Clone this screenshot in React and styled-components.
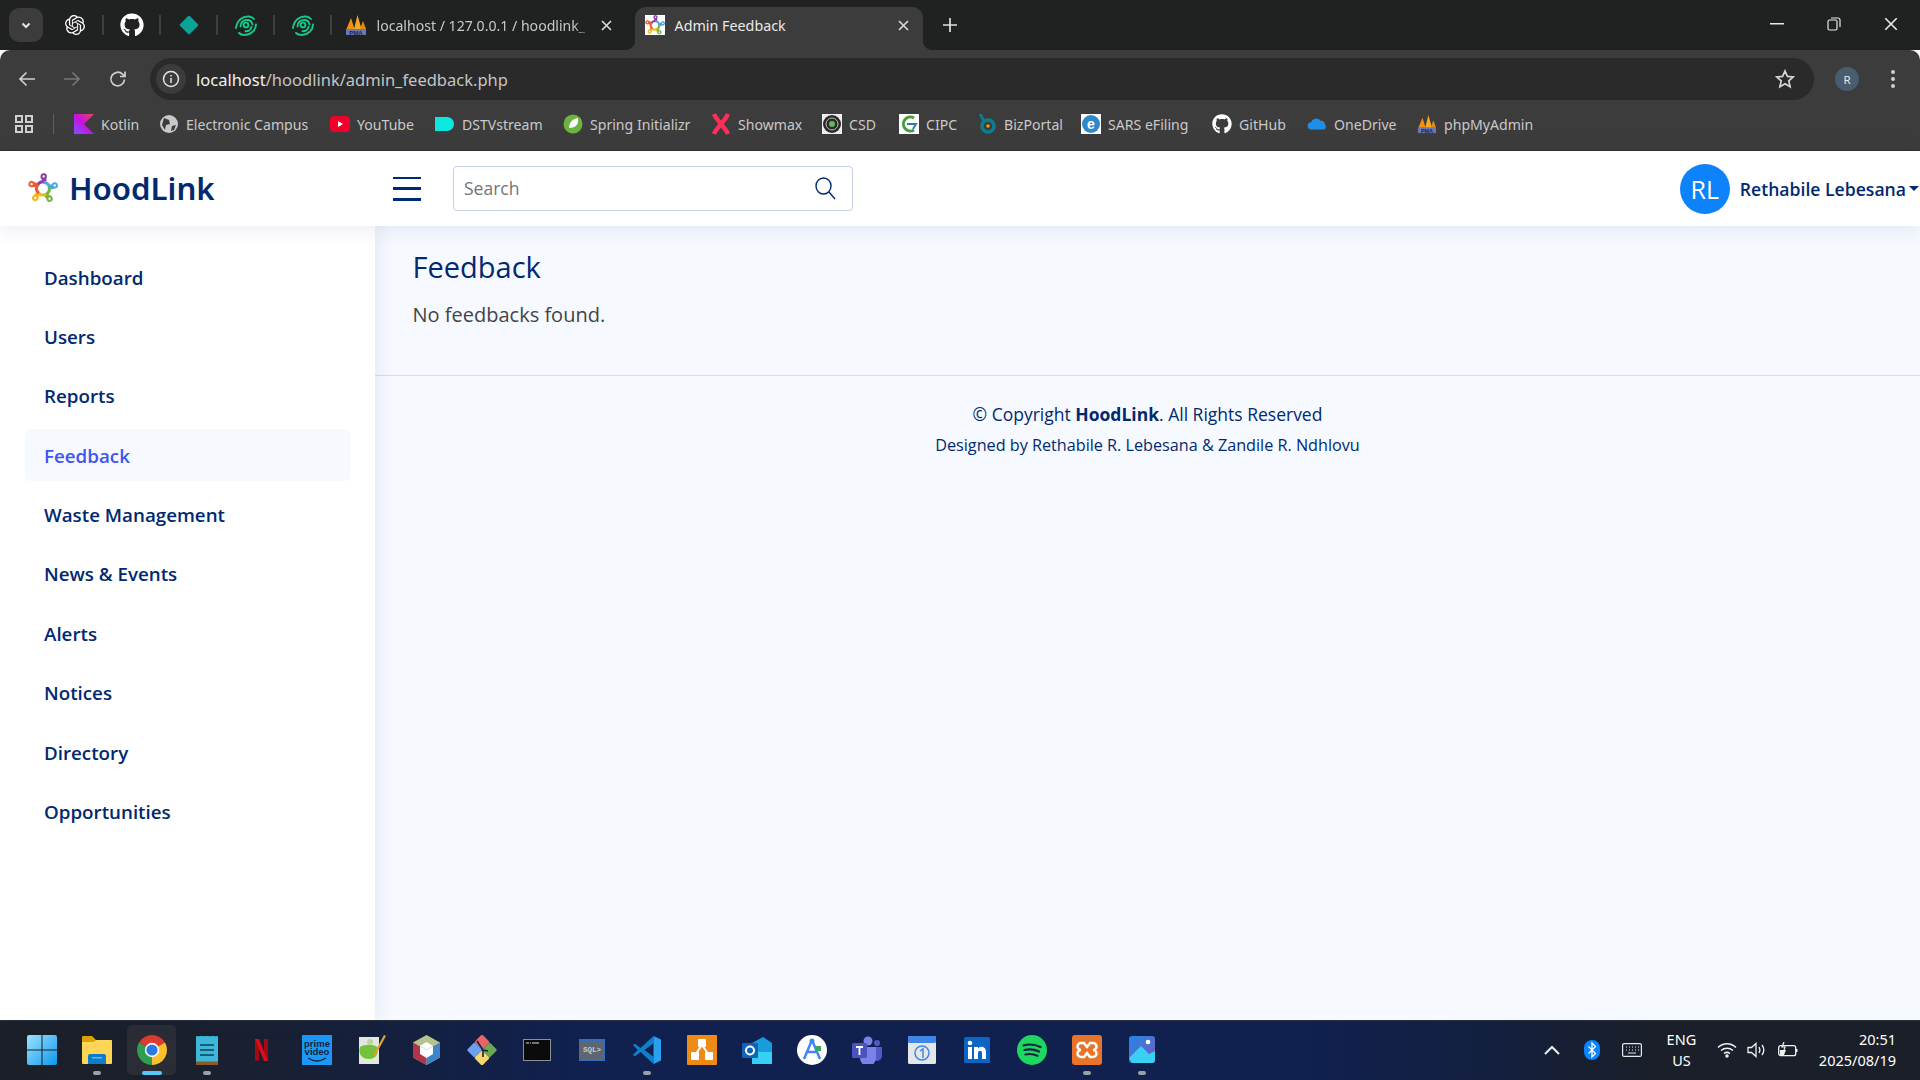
import React from "react"
import styled, { createGlobalStyle } from "styled-components"
import { FaGithub } from "react-icons/fa"
import { SiOpenai } from "react-icons/si"

const GlobalStyle = createGlobalStyle`
  html, body {
    margin: 0;
    padding: 0;
    height: 100%;
    overflow: hidden;
    background: #f6f9ff;
  }
  * {
    box-sizing: border-box;
  }
`

const Screen = styled.div`
  width: 1920px;
  height: 1080px;
  display: flex;
  flex-direction: column;
  overflow: hidden;
  font-family: "Open Sans", "Noto Sans", sans-serif;
`

/* browser chrome */
const TabStrip = styled.div`
  height: 50px;
  flex: none;
  background: #202221;
  display: flex;
  align-items: flex-end;
  font-family: "Noto Sans", "Open Sans", sans-serif;
`
const TabSearch = styled.div`
  width: 34px;
  height: 34px;
  margin: 0 3.5px 8px 9px;
  border-radius: 10px;
  background: #3c3c3c;
  display: flex;
  align-items: center;
  justify-content: center;
`
const PinnedTab = styled.div`
  width: 57px;
  height: 50px;
  display: flex;
  align-items: center;
  justify-content: center;
  position: relative;
  color: #fff;
  &::after {
    content: "";
    position: absolute;
    right: 0;
    top: 15px;
    width: 2px;
    height: 20px;
    background: #3e3f3f;
  }
`
const Tab = styled.div`
  width: 303px;
  height: 50px;
  padding: 0 23px 0 13px;
  display: flex;
  align-items: center;
  gap: 10px;
  font-size: 14.1px;
  color: #c8c8c8;
  flex: none;
`
const ActiveTab = styled.div`
  width: 288px;
  height: 43px;
  padding: 0 14px 7px 10px;
  display: flex;
  align-items: center;
  gap: 10px;
  font-size: 14.3px;
  color: #e9e9e9;
  background: #3c3c3c;
  border-radius: 11px 11px 0 0;
  flex: none;
  position: relative;
  &::before,
  &::after {
    content: "";
    position: absolute;
    bottom: 0;
    width: 10px;
    height: 10px;
  }
  &::before {
    left: -10px;
    background: radial-gradient(circle at 0 0, #202221 10px, #3c3c3c 10.5px);
  }
  &::after {
    right: -10px;
    background: radial-gradient(circle at 100% 0, #202221 10px, #3c3c3c 10.5px);
  }
`
const TabTitle = styled.span`
  flex: 1;
  white-space: nowrap;
  mask-image: ${(p) => (p.$fade ? "linear-gradient(90deg, #000 92%, transparent)" : "none")};
`
const NewTab = styled.div`
  width: 50px;
  height: 50px;
  margin-left: 2px;
  padding-bottom: 1px;
  display: flex;
  align-items: center;
  justify-content: center;
`
const WindowControls = styled.div`
  margin-left: auto;
  height: 50px;
  display: flex;
  align-items: center;
  padding-right: 22px;
  gap: 43px;
  padding-bottom: 2px;
`
const Toolbar = styled.div`
  height: 58px;
  flex: none;
  background: #3c3c3c;
  border-radius: 10px 10px 0 0;
  display: flex;
  align-items: center;
  padding: 8px 24px 8px 16px;
`
const NavIcon = styled.div`
  width: 22px;
  height: 22px;
  margin-right: ${(p) => p.$mr}px;
  display: flex;
  align-items: center;
  justify-content: center;
  flex: none;
`
const Omnibox = styled.div`
  flex: 1;
  height: 42px;
  background: #2a2a2a;
  border-radius: 21px;
  display: flex;
  align-items: center;
  padding: 0 19px 0 6px;
  font-family: "Noto Sans", "Open Sans", sans-serif;
`
const InfoBadge = styled.div`
  width: 30px;
  height: 30px;
  border-radius: 50%;
  background: #3c3c3c;
  display: flex;
  align-items: center;
  justify-content: center;
  margin-right: 10px;
`
const Url = styled.div`
  flex: 1;
  font-size: 16.5px;
  color: #c4c4c4;
  b {
    font-weight: 400;
    color: #f1f1f1;
  }
`
const AccountBadge = styled.div`
  width: 24px;
  height: 24px;
  border-radius: 50%;
  background: #4a5d6e;
  color: #e8e8e8;
  font-size: 11.5px;
  display: flex;
  align-items: center;
  justify-content: center;
  margin: 0 31px 0 21px;
  flex: none;
  font-family: "Noto Sans", sans-serif;
`
const BookmarkBar = styled.div`
  height: 43px;
  flex: none;
  background: #3c3c3c;
  border-bottom: 1px solid #2f2f2f;
  display: flex;
  align-items: center;
  padding: 0 0 10px 14px;
  font-family: "Noto Sans", "Open Sans", sans-serif;
`
const AppsDivider = styled.div`
  width: 1px;
  height: 20px;
  background: #5f5f5f;
  margin: 0 20px 0 19px;
`
const Bookmark = styled.div`
  display: flex;
  align-items: center;
  gap: 7px;
  width: ${(p) => p.$w}px;
  flex: none;
  font-size: 14.1px;
  color: #c9c9c9;
  white-space: nowrap;
`
const BookmarkIcon = styled.div`
  width: 20px;
  height: 20px;
  flex: none;
  display: flex;
  align-items: center;
  justify-content: center;
  color: #fff;
`

/* the page */
const Header = styled.header`
  height: 75px;
  flex: none;
  background: #fff;
  box-shadow: 0 2px 20px rgba(1, 41, 112, 0.1);
  display: flex;
  align-items: center;
  position: relative;
  z-index: 2;
`
const Logo = styled.div`
  width: 393px;
  padding: 0 0 2px 28px;
  display: flex;
  align-items: center;
  gap: 11px;
  font-family: "Noto Sans", sans-serif;
  font-size: 31.2px;
  font-weight: 600;
  color: #012970;
  flex: none;
`
const Burger = styled.div`
  width: 28px;
  height: 24px;
  margin-right: 32px;
  flex: none;
  display: flex;
  flex-direction: column;
  justify-content: space-between;
  span {
    display: block;
    height: 2.5px;
    background: #012970;
  }
`
const SearchBox = styled.div`
  width: 400px;
  height: 45px;
  border: 1px solid #c5d0e4;
  border-radius: 4px;
  display: flex;
  align-items: center;
  justify-content: space-between;
  padding: 0 16px 2px 10px;
  font-size: 17.5px;
  color: #6d747a;
`
const Profile = styled.div`
  margin-left: auto;
  display: flex;
  align-items: center;
  font-size: 17.6px;
  line-height: 24px;
  font-weight: 600;
  color: #012970;
`
const Avatar = styled.div`
  width: 50px;
  height: 50px;
  border-radius: 50%;
  background: #0d82fb;
  color: #fff;
  font-size: 25px;
  font-weight: 400;
  display: flex;
  align-items: center;
  justify-content: center;
  margin-right: 10px;
`
const Caret = styled.span`
  width: 0;
  height: 0;
  border-left: 5.5px solid transparent;
  border-right: 5.5px solid transparent;
  border-top: 5.5px solid #012970;
  margin: 0 1px 0 3px;
`
const Body = styled.div`
  flex: 1;
  display: flex;
  min-height: 0;
`
const Sidebar = styled.aside`
  width: 375px;
  flex: none;
  background: #fff;
  box-shadow: 0 0 20px rgba(1, 41, 112, 0.1);
  padding: 25px 25px 0;
  position: relative;
  z-index: 1;
`
const NavItem = styled.div`
  height: 52px;
  margin-bottom: 7.4px;
  padding-left: 19px;
  display: flex;
  align-items: center;
  border-radius: 5px;
  font-size: 18.75px;
  font-weight: 600;
  color: ${(p) => (p.$active ? "#4154f1" : "#012970")};
  background: ${(p) => (p.$active ? "#f6f9ff" : "transparent")};
`
const Main = styled.main`
  flex: 1;
  background: #f6f9ff;
  display: flex;
  flex-direction: column;
`
const Content = styled.section`
  height: 150px;
  padding: 21px 0 0 37.5px;
  border-bottom: 1px solid #cddfff;
`
const Title = styled.h1`
  margin: 0 0 13px;
  font-size: 29px;
  line-height: 40px;
  font-weight: 500;
  color: #012970;
`
const Empty = styled.p`
  margin: 0;
  font-size: 20px;
  line-height: 30px;
  color: #444;
`
const Footer = styled.footer`
  padding-top: 25px;
  text-align: center;
  color: #012970;
`
const Copyright = styled.div`
  font-size: 17.5px;
  line-height: 26px;
  margin-bottom: 5px;
  b {
    font-weight: 700;
  }
`
const Credits = styled.div`
  font-size: 16.2px;
  line-height: 26px;
`

/* windows taskbar */
const Taskbar = styled.div`
  height: 60px;
  flex: none;
  background: linear-gradient(90deg, #1b1f27 0%, #1a2030 12%, #10204f 30%, #10204f 68%, #141f3e 78%, #1a1f29 86%);
  border-top: 1px solid #2c303a;
  display: flex;
  align-items: center;
  padding: 0 0 2px 14px;
  font-family: "Noto Sans", "Open Sans", sans-serif;
`
const Slot = styled.div`
  width: ${(p) => (p.$active ? 49 : 55)}px;
  height: 50px;
  margin: 0 ${(p) => (p.$active ? 3 : 0)}px;
  flex: none;
  display: flex;
  align-items: center;
  justify-content: center;
  position: relative;
  border-radius: 5px;
  background: ${(p) => (p.$active ? "#2a2d36" : "transparent")};
  &::after {
    content: "";
    display: ${(p) => (p.$dot ? "block" : "none")};
    position: absolute;
    bottom: 0;
    left: 50%;
    transform: translateX(-50%);
    width: ${(p) => (p.$active ? 20 : 8)}px;
    height: 4px;
    border-radius: 2px;
    background: ${(p) => (p.$active ? "#5cc5f8" : "#9aa0a8")};
  }
`
const Tray = styled.div`
  margin-left: auto;
  display: flex;
  align-items: center;
  color: #fff;
`
const TrayIcon = styled.div`
  width: ${(p) => p.$w}px;
  flex: none;
  display: flex;
  justify-content: center;
`
const Lang = styled.div`
  width: 48px;
  text-align: center;
  font-size: 14.5px;
  line-height: 21px;
  margin: 0 8.6px 0 5px;
  flex: none;
`
const Clock = styled.div`
  width: 90px;
  margin: 0 24px 0 3px;
  font-size: 14.5px;
  line-height: 21px;
  text-align: right;
  flex: none;
  white-space: nowrap;
  span {
    display: block;
  }
`

/* icons */
const Chevron = () => (
  <svg width="12" height="12" viewBox="0 0 12 12" fill="none" stroke="#e6e6e6" strokeWidth="2">
    <path d="M2.5 4.5 6 8l3.5-3.5" />
  </svg>
)
const Close = ({ color = "#dcdcdc", size = 11, w = 1.6 }) => (
  <svg width={size} height={size} viewBox="0 0 11 11" stroke={color} strokeWidth={w} style={{ flex: "none" }}>
    <path d="M1 1l9 9M10 1l-9 9" />
  </svg>
)
const Fingerprint = () => (
  <svg width="24" height="22" viewBox="0 0 24 22" fill="none" stroke="#15c98f" strokeWidth="1.9" strokeLinecap="round">
    <circle cx="12" cy="11" r="2.4" />
    <path d="M6.5 12.5C6.5 8 10 6 13 6c3 0 5 2 5.500 4.500" />
    <path d="M2 14C3 6 9 2 15 2.500c2.500.3 4 1.300 5 2.500" />
    <path d="M17.500 13c-.5 2.500-3 4.500-6 4.300M22 10.500c0 5-4 10-11 10.500-2.500 0-4.500-.5-6-2" />
  </svg>
)
const Diamond = () => (
  <svg width="22" height="22" viewBox="0 0 22 22">
    <rect x="4" y="4" width="14" height="14" rx="1.5" transform="rotate(45 11 11)" fill="#0aa398" />
  </svg>
)
const Pma = ({ size = 22 }) => (
  <svg width={size} height={size} viewBox="0 0 22 22" style={{ flex: "none" }}>
    <path d="M6 4 9.500 15h-8z" fill="#f29111" />
    <path d="M12.500 1l4 14H9z" fill="#f7a823" />
    <path d="M18 7l3 8h-6z" fill="#e98a10" />
    <rect x="1" y="15" width="20" height="6" fill="#6c78af" />
    <text x="11" y="20.5" textAnchor="middle" fontSize="6" fontWeight="700" fill="#1d2450" fontFamily="Liberation Sans">
      PMA
    </text>
  </svg>
)
const logoColors = ["#8e3cab", "#4aa8e0", "#74b83d", "#f3b523", "#ee5a2b"]
const LogoMark = ({ size = 30, bg = "transparent" }) => (
  <svg width={size} height={size} viewBox="0 0 30 30" style={{ flex: "none", background: bg }}>
    {logoColors.map((c, i) => (
      <g key={c} transform={`rotate(${i * 72 + 8} 15 15.5)`} fill="none">
        <path d="M15.500 8.800c-3.500.1-5.800 2-6.600 5" stroke={c} strokeWidth="3" />
        <path d="M14.500 10c.8-2.500.5-4.500-.5-6" stroke={c} strokeWidth="4.600" />
        <circle cx="14" cy="3.400" r="2.200" stroke={c} strokeWidth="2" fill="#fff" />
      </g>
    ))}
  </svg>
)
const Back = ({ color }) => (
  <svg width="20" height="20" viewBox="0 0 20 20" fill="none" stroke={color} strokeWidth="1.7">
    <path d="M18 10H3M9.500 3.500 3 10l6.500 6.500" />
  </svg>
)
const Forward = ({ color }) => (
  <svg width="20" height="20" viewBox="0 0 20 20" fill="none" stroke={color} strokeWidth="1.7">
    <path d="M2 10h15M10.500 3.500 17 10l-6.500 6.500" />
  </svg>
)
const Reload = () => (
  <svg width="20" height="20" viewBox="0 0 20 20" fill="none" stroke="#cfcfcf" strokeWidth="1.7">
    <path d="M16.500 10.500a6.800 6.800 0 1 1-2-5.300L17 7.500" />
    <path d="M17 2.500v5h-5" />
  </svg>
)
const Info = () => (
  <svg width="18" height="18" viewBox="0 0 18 18" fill="none" stroke="#e4e4e4" strokeWidth="1.5">
    <circle cx="9" cy="9" r="7.5" />
    <path d="M9 8v5M9 5v1.500" />
  </svg>
)
const Star = () => (
  <svg width="20" height="20" viewBox="0 0 20 20" fill="none" stroke="#d6d6d6" strokeWidth="1.7" style={{ flex: "none" }}>
    <path d="M10 2l2.400 5.400 5.800.6-4.400 3.900 1.300 5.800L10 14.700l-5.100 3 1.300-5.800L1.800 8l5.800-.6z" />
  </svg>
)
const Dots = () => (
  <svg width="6" height="20" viewBox="0 0 6 20" fill="#cfcfcf" style={{ flex: "none" }}>
    <circle cx="3" cy="3" r="2" />
    <circle cx="3" cy="10" r="2" />
    <circle cx="3" cy="17" r="2" />
  </svg>
)
const AppsGrid = () => (
  <svg width="20" height="20" viewBox="0 0 20 20" fill="none" stroke="#cfcfcf" strokeWidth="2" style={{ flex: "none" }}>
    <rect x="2" y="2" width="6" height="6" />
    <rect x="12" y="2" width="6" height="6" />
    <rect x="2" y="12" width="6" height="6" />
    <rect x="12" y="12" width="6" height="6" />
  </svg>
)
const SearchIcon = () => (
  <svg width="22" height="24" viewBox="0 0 22 24" fill="none" stroke="#012970" strokeWidth="1.4">
    <ellipse cx="9.5" cy="10" rx="7.5" ry="8" />
    <path d="M15 16l6 7" />
  </svg>
)

const bookmarkIcons = {
  kotlin: (
    <svg width="20" height="20" viewBox="0 0 20 20">
      <defs>
        <linearGradient id="kt" x1="0" y1="1" x2="1" y2="0">
          <stop offset="0" stopColor="#7f52ff" />
          <stop offset="0.5" stopColor="#c711e1" />
          <stop offset="1" stopColor="#e44857" />
        </linearGradient>
      </defs>
      <path d="M0 0h20L10 10l10 10H0z" fill="url(#kt)" />
    </svg>
  ),
  campus: (
    <svg width="20" height="20" viewBox="0 0 20 20">
      <circle cx="10" cy="10" r="9" fill="#c8c8c8" />
      <path d="M5 4l5 2 1 4-4 1-1 5-3-5zM13 12l4-1-2 5-3 1z" fill="#3c3c3c" />
    </svg>
  ),
  youtube: (
    <svg width="20" height="20" viewBox="0 0 20 20">
      <rect y="2" width="20" height="16" rx="4" fill="#f0002a" />
      <path d="M8 7l5 3-5 3z" fill="#fff" />
    </svg>
  ),
  dstv: (
    <svg width="20" height="20" viewBox="0 0 20 20">
      <path d="M0 3h12a7 7 0 0 1 0 14H0z" fill="#0ce8e0" />
    </svg>
  ),
  spring: (
    <svg width="20" height="20" viewBox="0 0 20 20">
      <circle cx="10" cy="10" r="9.5" fill="#6db33f" />
      <path d="M15 4c1 6-2 10-9 10 0-5 3-9 9-10z" fill="#fff" />
    </svg>
  ),
  showmax: (
    <svg width="20" height="22" viewBox="0 0 20 22" fill="none" strokeWidth="4.5">
      <path d="M3 1c2 5 5 7 7 10-2 3-5 5-7 10" stroke="#ff2e57" />
      <path d="M17 1c-2 5-5 7-7 10 2 3 5 5 7 10" stroke="#ff2e57" />
    </svg>
  ),
  csd: (
    <svg width="20" height="20" viewBox="0 0 20 20">
      <rect width="20" height="20" fill="#f0f0f0" />
      <circle cx="10" cy="10" r="9" fill="#2a2a2a" />
      <circle cx="10" cy="10" r="6" fill="none" stroke="#bbb" />
      <circle cx="10" cy="10" r="3" fill="#5cb85c" />
    </svg>
  ),
  cipc: (
    <svg width="20" height="20" viewBox="0 0 20 20">
      <rect width="20" height="20" fill="#fff" />
      <path d="M15 4a7 7 0 1 0 0 12" fill="none" stroke="#4a9e3f" strokeWidth="3" />
      <path d="M8 10h9l-3 5" fill="none" stroke="#2d7fa8" strokeWidth="2" />
    </svg>
  ),
  biz: (
    <svg width="20" height="20" viewBox="0 0 20 20">
      <path d="M3 0l4 7" stroke="#0b7f8f" strokeWidth="3" />
      <circle cx="11" cy="12" r="6" fill="none" stroke="#0b7f8f" strokeWidth="3.5" />
      <circle cx="11" cy="12" r="1.8" fill="#f39c12" />
    </svg>
  ),
  sars: (
    <svg width="20" height="20" viewBox="0 0 20 20">
      <rect width="20" height="20" fill="#fff" />
      <circle cx="10" cy="10" r="9" fill="#2f88c9" />
      <text x="10" y="15" textAnchor="middle" fontSize="14" fontWeight="700" fill="#fff" fontFamily="Liberation Sans">
        e
      </text>
    </svg>
  ),
  github: <FaGithub size={20} />,
  onedrive: (
    <svg width="22" height="20" viewBox="0 0 22 20">
      <path d="M5 16a4 4 0 0 1-.5-8A6 6 0 0 1 15 6.500a4.500 4.500 0 0 1 5 4.500c1.500 2 .5 5-2 5z" fill="#1d8fe8" />
    </svg>
  ),
  pma: <Pma size={20} />,
}

const bookmarks = [
  { name: "Kotlin", icon: "kotlin", w: 85 },
  { name: "Electronic Campus", icon: "campus", w: 171 },
  { name: "YouTube", icon: "youtube", w: 105 },
  { name: "DSTVstream", icon: "dstv", w: 128 },
  { name: "Spring Initializr", icon: "spring", w: 148 },
  { name: "Showmax", icon: "showmax", w: 111 },
  { name: "CSD", icon: "csd", w: 77 },
  { name: "CIPC", icon: "cipc", w: 78 },
  { name: "BizPortal", icon: "biz", w: 104 },
  { name: "SARS eFiling", icon: "sars", w: 131 },
  { name: "GitHub", icon: "github", w: 95 },
  { name: "OneDrive", icon: "onedrive", w: 110 },
  { name: "phpMyAdmin", icon: "pma", w: 120 },
]

const taskIcons = [
  {
    key: "win",
    svg: (
      <svg width="30" height="30" viewBox="0 0 30 30">
        <defs>
          <linearGradient id="wn" x1="0" y1="0" x2="1" y2="1">
            <stop offset="0" stopColor="#9fe3fb" />
            <stop offset="1" stopColor="#0c98ef" />
          </linearGradient>
        </defs>
        <path d="M2 0h12.500v14.500H0V2a2 2 0 0 1 2-2zM15.500 0H28a2 2 0 0 1 2 2v12.500H15.500zM0 15.500h14.500V30H2a2 2 0 0 1-2-2zM15.500 15.500H30V28a2 2 0 0 1-2 2H15.500z" fill="url(#wn)" />
      </svg>
    ),
  },
  {
    key: "explorer",
    dot: true,
    svg: (
      <svg width="30" height="28" viewBox="0 0 30 28">
        <path d="M1 0h9l4 4h15a1 1 0 0 1 1 1v5H0V1a1 1 0 0 1 1-1z" fill="#dba200" />
        <path d="M0 6h12l2-2h15a1 1 0 0 1 1 1v22a1 1 0 0 1-1 1H1a1 1 0 0 1-1-1z" fill="#ffd558" />
        <path d="M6 20a2 2 0 0 1 2-2h14a2 2 0 0 1 2 2v8H6z" fill="#0f7ccb" />
        <rect x="10" y="21" width="10" height="1.5" fill="#5eb7ee" />
      </svg>
    ),
  },
  {
    key: "chrome",
    dot: true,
    active: true,
    svg: (
      <svg width="30" height="30" viewBox="0 0 30 30">
        <path d="M15 15 2.010 7.500a15 15 0 0 1 25.980 0z" fill="#dd3b30" />
        <path d="M15 15l12.990-7.500A15 15 0 0 1 15 30z" fill="#fbc02d" />
        <path d="M15 15v15A15 15 0 0 1 2.010 7.500z" fill="#2f9e4f" />
        <circle cx="15" cy="15" r="7.2" fill="#fff" />
        <circle cx="15" cy="15" r="5.6" fill="#2a78e4" />
      </svg>
    ),
  },
  {
    key: "notepad",
    dot: true,
    svg: (
      <svg width="22" height="30" viewBox="0 0 22 30">
        <rect y="1" width="22" height="29" rx="1" fill="#3fb7d8" />
        <rect y="26.5" width="22" height="3.5" fill="#8a5a2b" />
        <path d="M3 2v-1M8 2v-1M14 2v-1M19 2v-1" stroke="#19a0c4" strokeWidth="2.5" />
        <path d="M4 10h14M4 15h14M4 20h14" stroke="#12607a" strokeWidth="2.2" />
      </svg>
    ),
  },
  {
    key: "netflix",
    svg: (
      <svg width="13" height="22" viewBox="0 0 13 22">
        <path d="M0 0h4v21.500L0 22zM9 0h4v22l-4-.5z" fill="#a50912" />
        <path d="M0 0h4l9 22H9z" fill="#d60f1a" />
      </svg>
    ),
  },
  {
    key: "prime",
    svg: (
      <svg width="30" height="30" viewBox="0 0 30 30">
        <rect width="30" height="30" fill="#1b98f5" />
        <text x="15" y="11.5" textAnchor="middle" fontSize="9.5" fontWeight="700" fill="#10233f" fontFamily="Liberation Sans">
          prime
        </text>
        <text x="15" y="20" textAnchor="middle" fontSize="9.5" fontWeight="700" fill="#10233f" fontFamily="Liberation Sans">
          video
        </text>
        <path d="M6 23c6 4 12 4 18 0" fill="none" stroke="#10233f" strokeWidth="1.5" />
      </svg>
    ),
  },
  {
    key: "npp",
    svg: (
      <svg width="28" height="30" viewBox="0 0 28 30">
        <path d="M1 2h20v27H1z" fill="#e4e7dc" />
        <path d="M2 12c4-3 14-3 17 0 2 5 0 12-8 12S0 18 2 12z" fill="#74c23a" />
        <circle cx="12" cy="7" r="3" fill="#bcd3a0" />
        <path d="M26 0l2 1-11 20-2-1z" fill="#d8a23a" />
      </svg>
    ),
  },
  {
    key: "netbeans",
    svg: (
      <svg width="27" height="30" viewBox="0 0 27 30">
        <path d="M13.500 0 27 7.500v15L13.500 30 0 22.500v-15z" fill="#b4c48a" />
        <path d="M0 7.500l13.500 7.500V30L0 22.500z" fill="#b5324d" />
        <path d="M27 7.500 13.500 15V30L27 22.500z" fill="#3f83c8" />
        <path d="M13.500 7 20 11v8l-6.500 4L7 19v-8z" fill="#fff" />
        <path d="M7 11l6.500 4 6.500-4" fill="none" stroke="#d8dde4" />
      </svg>
    ),
  },
  {
    key: "git",
    svg: (
      <svg width="30" height="30" viewBox="0 0 30 30">
        <rect x="9.5" y="1.5" width="11" height="11" rx="1.5" transform="rotate(45 15 7)" fill="#e7646a" />
        <rect x="17" y="9.5" width="11" height="11" rx="1.5" transform="rotate(45 22.5 15)" fill="#6ba84f" />
        <rect x="2" y="9.5" width="11" height="11" rx="1.5" transform="rotate(45 7.5 15)" fill="#6aa2ee" />
        <rect x="9.5" y="17.5" width="11" height="11" rx="1.5" transform="rotate(45 15 23)" fill="#f5d76e" />
        <path d="M10 6l6 9v7M16 15l5 1" stroke="#1a2240" strokeWidth="1.6" fill="none" />
      </svg>
    ),
  },
  {
    key: "cmd",
    svg: (
      <svg width="28" height="22" viewBox="0 0 28 22">
        <rect width="28" height="22" fill="#8b9096" />
        <rect x="1" y="1" width="26" height="20" fill="#0b0b0b" />
        <path d="M3 4h3M7 4h1M9 4h7" stroke="#ddd" strokeWidth="1.2" />
      </svg>
    ),
  },
  {
    key: "sql",
    svg: (
      <svg width="26" height="22" viewBox="0 0 26 22">
        <rect width="26" height="22" fill="#2f6fc0" />
        <rect x="1" y="2" width="24" height="19" fill="#5f6670" />
        <text x="13" y="13" textAnchor="middle" fontSize="7.5" fontWeight="700" fill="#c8ccd2" fontFamily="Liberation Mono">
          SQL&gt;
        </text>
      </svg>
    ),
  },
  {
    key: "vscode",
    dot: true,
    svg: (
      <svg width="30" height="30" viewBox="0 0 30 30">
        <path d="M21.500 1 8.500 13 3 8.800.8 10l5 5-5 5L3 21.200 8.500 17l13 12v-7.200L12.500 15l9-6.800z" fill="#0f7fcb" />
        <path d="M21.500 1 29 4.500v21L21.500 29z" fill="#2aa1ee" />
      </svg>
    ),
  },
  {
    key: "drawio",
    svg: (
      <svg width="30" height="30" viewBox="0 0 30 30">
        <rect width="30" height="30" rx="1" fill="#ee8a16" />
        <path d="M15 10 8 20M15 10l7 10" stroke="#fff" strokeWidth="2" />
        <rect x="11" y="4" width="8" height="8" rx="1" fill="#fff" />
        <rect x="4" y="17" width="8" height="8" rx="1" fill="#fff" />
        <rect x="18" y="17" width="8" height="8" rx="1" fill="#fff" />
      </svg>
    ),
  },
  {
    key: "outlook",
    svg: (
      <svg width="30" height="28" viewBox="0 0 30 28">
        <path d="M10 7l11-6 9 6v21H10z" fill="#1a9bdc" />
        <path d="M10 16h20v12H10z" fill="#35d0f4" />
        <rect y="7" width="16" height="15" rx="1" fill="#0f64b8" />
        <circle cx="8" cy="14.5" r="4" fill="none" stroke="#fff" strokeWidth="2" />
      </svg>
    ),
  },
  {
    key: "android",
    svg: (
      <svg width="30" height="30" viewBox="0 0 30 30">
        <circle cx="15" cy="15" r="15" fill="#fff" />
        <path d="M15 5 7 24M15 5l8 19M9 17h12" fill="none" stroke="#4285f4" strokeWidth="2.5" />
        <circle cx="15" cy="6" r="2.5" fill="#4285f4" />
        <rect x="19" y="11" width="5" height="5" fill="#3ba55d" />
      </svg>
    ),
  },
  {
    key: "teams",
    svg: (
      <svg width="30" height="28" viewBox="0 0 30 28">
        <circle cx="16" cy="5" r="4.5" fill="#7b83eb" />
        <circle cx="25" cy="7" r="3" fill="#5059c9" />
        <path d="M20 11h10v9a5 5 0 0 1-10 0z" fill="#5059c9" />
        <path d="M8 11h16v11a8 8 0 0 1-16 0z" fill="#7b83eb" />
        <rect y="7" width="15" height="15" rx="1.5" fill="#4b53bc" />
        <path d="M4 11h7M7.500 11v8" stroke="#fff" strokeWidth="1.8" />
      </svg>
    ),
  },
  {
    key: "calendar",
    svg: (
      <svg width="28" height="28" viewBox="0 0 28 28">
        <rect width="28" height="28" rx="1.5" fill="#e4e6e8" />
        <rect width="28" height="7" rx="1.5" fill="#3f86e8" />
        <circle cx="14" cy="17" r="7" fill="none" stroke="#3f86e8" strokeWidth="1.5" />
        <path d="M12 15l3-2v9" fill="none" stroke="#3f86e8" strokeWidth="1.5" />
      </svg>
    ),
  },
  {
    key: "linkedin",
    svg: (
      <svg width="26" height="26" viewBox="0 0 26 26">
        <rect width="26" height="26" rx="1.5" fill="#0a66c2" />
        <path d="M4 10h4v12H4zM10 10h4v2c1-3 8-3.500 8 3v7h-4v-6c0-3-4-3-4 0v6h-4z" fill="#fff" />
        <circle cx="6" cy="6" r="2.3" fill="#fff" />
      </svg>
    ),
  },
  {
    key: "spotify",
    svg: (
      <svg width="30" height="30" viewBox="0 0 30 30" fill="none">
        <circle cx="15" cy="15" r="15" fill="#1ed760" />
        <path d="M6.500 10.500c6-1.800 12-1 17 1.500M7.500 15c5-1.300 10-.7 14.500 1.500M8.500 19.500c4-1 8-.5 12 1.300" stroke="#10233f" strokeWidth="2.2" strokeLinecap="round" />
      </svg>
    ),
  },
  {
    key: "xampp",
    dot: true,
    svg: (
      <svg width="30" height="30" viewBox="0 0 30 30">
        <rect width="30" height="30" rx="3" fill="#e8742a" />
        <path d="M9 8h3l3 4 3-4h3a3.500 3.500 0 0 1 0 7 3.500 3.500 0 0 1 0 7h-3l-3-4-3 4H9a3.500 3.500 0 0 1 0-7 3.500 3.500 0 0 1 0-7z" fill="none" stroke="#fff" strokeWidth="2.5" />
      </svg>
    ),
  },
  {
    key: "photos",
    dot: true,
    svg: (
      <svg width="26" height="28" viewBox="0 0 26 28">
        <defs>
          <linearGradient id="ph" x1="0" y1="0" x2="1" y2="1">
            <stop offset="0" stopColor="#1e88e5" />
            <stop offset="1" stopColor="#7e57c2" />
          </linearGradient>
        </defs>
        <rect width="26" height="27" rx="3" fill="url(#ph)" />
        <path d="M0 22l12-12 8 8 6-3v9a3 3 0 0 1-3 3H3z" fill="#3ad0f5" />
        <circle cx="19" cy="6" r="2.3" fill="#fff" />
      </svg>
    ),
  },
]

const navItems = [
  "Dashboard",
  "Users",
  "Reports",
  "Feedback",
  "Waste Management",
  "News & Events",
  "Alerts",
  "Notices",
  "Directory",
  "Opportunities",
]

const App = () => {
  return (
    <Screen>
      <GlobalStyle />
      <TabStrip>
        <TabSearch>
          <Chevron />
        </TabSearch>
        <PinnedTab>
          <SiOpenai size={20} />
        </PinnedTab>
        <PinnedTab>
          <FaGithub size={24} />
        </PinnedTab>
        <PinnedTab>
          <Diamond />
        </PinnedTab>
        <PinnedTab>
          <Fingerprint />
        </PinnedTab>
        <PinnedTab>
          <Fingerprint />
        </PinnedTab>
        <Tab>
          <Pma />
          <TabTitle $fade>localhost / 127.0.0.1 / hoodlink_</TabTitle>
          <Close />
        </Tab>
        <ActiveTab>
          <LogoMark size={20} bg="#fff" />
          <TabTitle>Admin Feedback</TabTitle>
          <Close />
        </ActiveTab>
        <NewTab>
          <svg width="14" height="14" viewBox="0 0 14 14" stroke="#e0e0e0" strokeWidth="1.7">
            <path d="M7 0v14M0 7h14" />
          </svg>
        </NewTab>
        <WindowControls>
          <svg width="14" height="2" viewBox="0 0 14 2" fill="#e8e8e8">
            <rect width="14" height="1.5" />
          </svg>
          <svg width="14" height="14" viewBox="0 0 14 14" fill="none" stroke="#e8e8e8" strokeWidth="1.2">
            <rect x="1" y="3" width="9" height="10" rx="1.5" />
            <path d="M4 1h7a2 2 0 0 1 2 2v7" />
          </svg>
          <Close color="#f0f0f0" size={14} w={1.2} />
        </WindowControls>
      </TabStrip>

      <Toolbar>
        <NavIcon $mr={23}>
          <Back color="#cfcfcf" />
        </NavIcon>
        <NavIcon $mr={24}>
          <Forward color="#767676" />
        </NavIcon>
        <NavIcon $mr={21}>
          <Reload />
        </NavIcon>
        <Omnibox>
          <InfoBadge>
            <Info />
          </InfoBadge>
          <Url>
            <b>localhost</b>/hoodlink/admin_feedback.php
          </Url>
          <Star />
        </Omnibox>
        <AccountBadge>R</AccountBadge>
        <Dots />
      </Toolbar>

      <BookmarkBar>
        <AppsGrid />
        <AppsDivider />
        {bookmarks.map((b) => (
          <Bookmark key={b.name} $w={b.w}>
            <BookmarkIcon>{bookmarkIcons[b.icon]}</BookmarkIcon>
            {b.name}
          </Bookmark>
        ))}
      </BookmarkBar>

      <Header>
        <Logo>
          <LogoMark />
          HoodLink
        </Logo>
        <Burger>
          <span />
          <span />
          <span />
        </Burger>
        <SearchBox>
          Search
          <SearchIcon />
        </SearchBox>
        <Profile>
          <Avatar>RL</Avatar>
          Rethabile Lebesana
          <Caret />
        </Profile>
      </Header>

      <Body>
        <Sidebar>
          {navItems.map((item) => (
            <NavItem key={item} $active={item === "Feedback"}>
              {item}
            </NavItem>
          ))}
        </Sidebar>
        <Main>
          <Content>
            <Title>Feedback</Title>
            <Empty>No feedbacks found.</Empty>
          </Content>
          <Footer>
            <Copyright>
              © Copyright <b>HoodLink</b>. All Rights Reserved
            </Copyright>
            <Credits>Designed by Rethabile R. Lebesana &amp; Zandile R. Ndhlovu</Credits>
          </Footer>
        </Main>
      </Body>

      <Taskbar>
        {taskIcons.map((t) => (
          <Slot key={t.key} $dot={t.dot} $active={t.active}>
            {t.svg}
          </Slot>
        ))}
        <Tray>
          <TrayIcon $w={40}>
            <svg width="18" height="10" viewBox="0 0 18 10" fill="none" stroke="#f0f0f0" strokeWidth="2">
              <path d="M2 9l7-7 7 7" />
            </svg>
          </TrayIcon>
          <TrayIcon $w={40}>
            <svg width="16" height="20" viewBox="0 0 16 20">
              <rect width="16" height="20" rx="8" fill="#0a84ff" />
              <path d="M4.500 6.500l7 7L8 17V3l3.500 3.500-7 7" fill="none" stroke="#fff" strokeWidth="1.3" />
            </svg>
          </TrayIcon>
          <TrayIcon $w={40}>
            <svg width="20" height="14" viewBox="0 0 20 14" fill="none" stroke="#e8e8e8" strokeWidth="1.2">
              <rect x=".6" y=".6" width="18.8" height="12.8" rx="1.5" />
              <path d="M4 4h1M7 4h1M10 4h1M13 4h1M16 4h1M4 7h1M7 7h1M10 7h1M13 7h1M16 7h1M6 10h8" />
            </svg>
          </TrayIcon>
          <Lang>
            ENG
            <br />
            US
          </Lang>
          <TrayIcon $w={26}>
            <svg width="20" height="16" viewBox="0 0 20 16" fill="none" stroke="#f0f0f0" strokeWidth="1.5">
              <path d="M1 5.500c5-5 13-5 18 0M4 8.500c3.500-3 8.500-3 12 0M7 11.500c2-1.500 4-1.500 6 0" />
              <circle cx="10" cy="14" r="1" fill="#f0f0f0" />
            </svg>
          </TrayIcon>
          <TrayIcon $w={33}>
            <svg width="20" height="16" viewBox="0 0 20 16" fill="none" stroke="#f0f0f0" strokeWidth="1.3">
              <path d="M1 5.500h3.500L9 1.500v13l-4.500-4H1z" />
              <path d="M12 5c1.200 2 1.200 4 0 6M15 3c2.200 3 2.200 7 0 10" />
            </svg>
          </TrayIcon>
          <TrayIcon $w={30}>
            <svg width="20" height="16" viewBox="0 0 20 16">
              <rect x=".7" y="3.700" width="17" height="10" rx="2" fill="none" stroke="#f0f0f0" strokeWidth="1.3" />
              <path d="M2 13V8l6 0-2 5z" fill="#f0f0f0" />
              <rect x="18" y="7" width="1.5" height="3" fill="#f0f0f0" />
              <path d="M6 0l-2 5h3l-1 3" fill="none" stroke="#f0f0f0" strokeWidth="1.2" />
            </svg>
          </TrayIcon>
          <Clock>
            <span>20:51</span>
            <span>2025/08/19</span>
          </Clock>
        </Tray>
      </Taskbar>
    </Screen>
  )
}

export default App
